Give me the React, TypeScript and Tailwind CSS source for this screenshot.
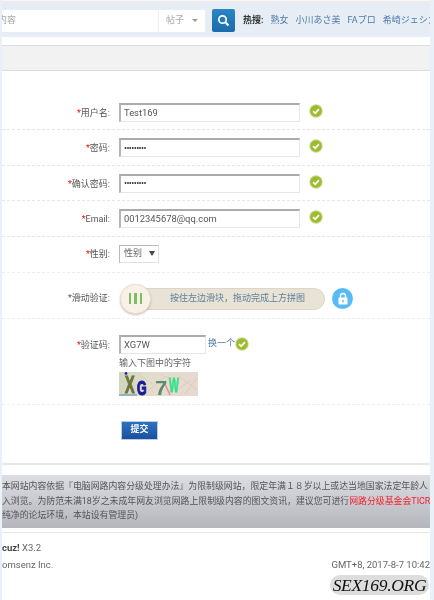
import React from "react";

const font = { fontFamily: '"Roboto","Noto Sans CJK SC",sans-serif' };

function Check() {
  return (
    <svg width="14" height="14" viewBox="0 0 14 14" className="shrink-0">
      <circle cx="7" cy="7" r="6.7" fill="#c9d98f" />
      <circle cx="7" cy="7" r="5.8" fill="#9dbb2c" />
      <path d="M4 7.2 L6.2 9.2 L10 5.2" fill="none" stroke="#fff" strokeWidth="1.7" />
    </svg>
  );
}

function Label({ text, grey }: { text: string; grey?: boolean }) {
  return (
    <div className="w-[108px] shrink-0 text-right text-[9px] leading-[12px] text-[#555]">
      <span className={grey ? "text-[#555]" : "text-[#f01010]"}>*</span>
      {text}:
    </div>
  );
}

function Field({ label, value, password }: { label: string; value: string; password?: boolean }) {
  return (
    <div className="flex h-[35.4px] items-start border-b border-dashed border-[#e6e6e6] pt-[8px]">
      <div className="pt-[4px]">
        <Label text={label} />
      </div>
      <div className="ml-[9px] flex h-[19px] w-[181px] items-center border border-[#e6e6e6] border-t-2 border-l-2 border-t-[#ababab] border-l-[#b5b5b5] bg-white pl-[3px] text-[9.4px] text-[#555]">
        {password ? <span className="text-[9px] tracking-[-0.6px] text-[#333]">•••••••••</span> : value}
      </div>
      <div className="ml-[9px] mt-[1px]">
        <Check />
      </div>
    </div>
  );
}

export default function App() {
  return (
    <div style={font} className="flex h-[600px] w-[434px] overflow-hidden bg-[#eaf0f8] pl-[2px] pr-[4px] blur-[0.3px]">
      <div className="relative flex w-full min-w-0 flex-col overflow-hidden bg-white">
        <div className="h-[1px] bg-[#f6f6f6]" />
        <div className="h-[2px] bg-[#ececec]" />
        <div className="flex h-[34px] items-center overflow-hidden bg-[#e6edf5] pt-[1px]">
          <div className="flex h-[22px] w-[203px] shrink-0 items-center overflow-hidden bg-white">
            <span className="-ml-[4px] flex-1 text-[9px] text-[#aaa]">内容</span>
            <div className="flex h-full w-[47px] items-center border-l border-[#eeeeee] pl-[7px] text-[9px] text-[#aaa]">
              帖子
              <span className="ml-[8px] h-0 w-0 border-x-[3px] border-t-[3px] border-x-transparent border-t-[#999]" />
            </div>
          </div>
          <button className="ml-[7px] flex h-[23px] w-[23px] shrink-0 items-center justify-center rounded-[2px] bg-gradient-to-b from-[#2a86c4] to-[#1a6cab]">
            <svg width="13" height="13" viewBox="0 0 13 13">
              <circle cx="5.5" cy="5.5" r="3.7" fill="none" stroke="#fff" strokeWidth="1.7" />
              <path d="M8.3 8.3 L11.5 11.5" stroke="#fff" strokeWidth="2.2" />
            </svg>
          </button>
          <div className="ml-[8px] flex items-center whitespace-nowrap text-[9px] text-[#4f79a6]">
            <b className="font-bold text-[#333]">热搜:</b>
            <span className="ml-[7px]">熟女</span>
            <span className="ml-[7px]">小川あさ美</span>
            <span className="ml-[7px]">FAプロ</span>
            <span className="ml-[7px]">希崎ジェシカ</span>
          </div>
        </div>
        <div className="h-[8px]" />
        <div className="h-[26px] border-y border-[#dcdcdc] bg-[#f2f2f2]" />

        <div className="h-[24px]" />
        <Field label="用户名" value="Test169" />
        <Field label="密码" value="" password />
        <Field label="确认密码" value="" password />
        <Field label="Email" value="0012345678@qq.com" />

        <div className="flex h-[36px] items-start border-b border-dashed border-[#eeeeee] pt-[8px]">
          <div className="pt-[3px]">
            <Label text="性别" />
          </div>
          <div className="ml-[9px] flex h-[18px] w-[40px] items-center border border-[#e0e0e0] border-l-[#bbb] border-t-[#bbb] pl-[4px] text-[9px] text-[#666]">
            性别
            <span className="ml-[7px] h-0 w-0 border-x-[3px] border-t-[5px] border-x-transparent border-t-[#444]" />
          </div>
        </div>

        <div className="flex h-[46px] items-start border-b border-dashed border-[#eeeeee] pt-[15px]">
          <div className="pt-[4px]">
            <Label text="滑动验证" grey />
          </div>
          <div className="relative ml-[10px] flex h-[22px] w-[205px] items-center rounded-full border border-[#ddd5c6] bg-[#e9e2d6] pl-[49px] text-[9px] text-[#5f8298]">
            按住左边滑块，拖动完成上方拼图
            <div className="absolute left-[-1px] top-[-5px] flex h-[30px] w-[31px] items-center justify-center gap-[3px] rounded-full border border-[#e8e0d2] bg-[#f7f1e8] shadow-[0_1px_2px_rgba(150,130,100,0.5)]">
              <span className="h-[11px] w-[2.5px] bg-[#7fbd62]" />
              <span className="h-[11px] w-[2.5px] bg-[#7fbd62]" />
              <span className="h-[11px] w-[2.5px] bg-[#7fbd62]" />
            </div>
          </div>
          <div className="ml-[7px] flex h-[21px] w-[21px] items-center justify-center rounded-full bg-[#58bbf8]">
            <svg width="12" height="13" viewBox="0 0 12 13">
              <path d="M3.5 6 V4 A2.5 2.5 0 0 1 8.5 4 V6" fill="none" stroke="#fff" strokeWidth="1.4" />
              <rect x="1.5" y="5.5" width="9" height="7" rx="1" fill="#fff" />
              <rect x="5.3" y="7.8" width="1.4" height="2.6" fill="#58bbf8" />
            </svg>
          </div>
        </div>

        <div className="flex h-[86px] items-start border-b border-dashed border-[#eeeeee] pt-[16px]">
          <div className="pt-[4px]">
            <Label text="验证码" />
          </div>
          <div className="ml-[9px] flex flex-col">
            <div className="flex items-center">
              <div className="flex h-[19px] w-[87px] items-center border border-[#e6e6e6] border-t-2 border-l-2 border-t-[#ababab] border-l-[#b5b5b5] pl-[3px] text-[9.4px] text-[#555]">
                XG7W
              </div>
              <span className="ml-[2px] text-[9px] text-[#4f79a6]">换一个</span>
              <Check />
            </div>
            <div className="mt-[2px] text-[9px] leading-[14px] text-[#666]">输入下图中的字符</div>
            <svg width="79" height="24" viewBox="0 0 79 24" className="mt-[2px]">
              <defs>
                <linearGradient id="cbg" x1="0" x2="1" y1="0" y2="0">
                  <stop offset="0" stopColor="#cfd8bb" />
                  <stop offset="0.4" stopColor="#e3dccd" />
                  <stop offset="1" stopColor="#e8d9d2" />
                </linearGradient>
              </defs>
              <rect width="79" height="24" fill="url(#cbg)" />
              <path d="M0 8 L12 14 M20 3 L34 12 M30 18 L45 6 M42 3 L60 10 M60 4 L78 18 M55 20 L72 8 M66 22 L78 6 M2 18 L14 5" stroke="#d8d0bc" strokeWidth="1" />
              <path d="M0 23 H18" stroke="#7fa6c9" strokeWidth="1.5" />
              <path d="M46 12 L51 23" stroke="#e58f8f" strokeWidth="1.5" />
              <circle cx="7" cy="1.5" r="1.4" fill="#3322cc" />
              <text transform="translate(6,21) scale(0.6,1)" fontSize="24" fontWeight="700" fill="#6d7440" stroke="#6d7440" strokeWidth="1.2" fontFamily="Liberation Sans">X</text>
              <text transform="translate(18,23) scale(0.62,1)" fontSize="20" fontWeight="700" fill="#1a1a9a" stroke="#1a1a9a" strokeWidth="1.2" fontFamily="Liberation Sans">G</text>
              <text transform="translate(36,23) scale(1.1,1)" fontSize="20" fontWeight="700" fill="#5c8a70" fontFamily="Liberation Sans">7</text>
              <text transform="translate(50,20) scale(0.5,1)" fontSize="21" fontWeight="700" fill="#33e08a" stroke="#33e08a" strokeWidth="0.8" fontFamily="Liberation Sans">W</text>
            </svg>
          </div>
        </div>

        <div className="flex-none pl-[119px] pt-[16px]">
          <button className="flex h-[19px] w-[37px] items-center justify-center border border-[#b9cde6] bg-gradient-to-b from-[#2c72bf] to-[#1c509f] text-[9px] font-bold text-white">
            提交
          </button>
        </div>
        <div className="mt-[23px] h-[2px] bg-[#e6e6e6]" />
        <div className="h-[10px]" />
        <div className="flex h-[53px] flex-col justify-center overflow-hidden whitespace-nowrap bg-gradient-to-b from-[#dddee4] to-[#b4b6bb] text-[8.9px] leading-[14.4px] text-[#555]">
          <div>本网站内容依据『电脑网路内容分级处理办法』为限制级网站，限定年满１８岁以上或达当地国家法定年龄人</div>
          <div>
            入浏览。为防范未满18岁之未成年网友浏览网路上限制级内容的图文资讯，建议您可进行
            <span className="text-[#f5222d]">网路分级基金会TICRF</span>
          </div>
          <div>纯净的论坛环境，本站设有管理员)</div>
        </div>
        <div className="h-[4px]" />
        <div className="h-[1px] bg-[#e6e6e6]" />
        <div className="flex flex-col pt-[9px] text-[9.5px] text-[#666]">
          <div className="leading-[12px]">
            <b className="text-[#444]">cuz!</b> X3.2
          </div>
          <div className="mt-[5px] flex justify-between leading-[12px]">
            <span>omsenz Inc.</span>
            <span>GMT+8, 2017-8-7 10:42</span>
          </div>
        </div>
        <div
          style={{ fontFamily: '"Liberation Serif",serif' }}
          className="absolute bottom-[5px] right-[1px] flex h-[20px] w-[99px] items-center justify-center rounded-full bg-[#dddddd] text-[17.5px] italic tracking-[-0.3px] text-[#111]"
        >
          SEX169.ORG
        </div>
      </div>
    </div>
  );
}
